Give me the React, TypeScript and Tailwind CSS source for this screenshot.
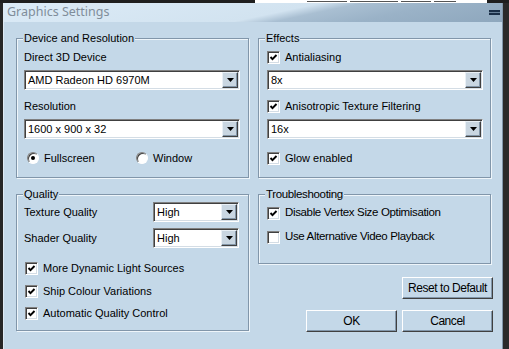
import React from "react";

const BODY = "bg-[#c4d8e8]";
const NARROW = "text-[11.5px] tracking-[-0.35px]";

function Arrow() {
  return (
    <svg width="7" height="4" viewBox="0 0 7 4" className="block">
      <polygon points="0,0 7,0 3.5,4" fill="#000" />
    </svg>
  );
}

function Combo({ value, className = "" }: { value: string; className?: string }) {
  return (
    <div
      className={`flex h-[20px] items-stretch bg-white border border-t-[#808080] border-l-[#808080] border-b-white border-r-white shadow-[inset_1px_1px_0_#404040,inset_-1px_-1px_0_#d4dde5] ${className}`}
    >
      <div className="flex flex-1 items-center pl-[3px] text-[11px] leading-none text-black">{value}</div>
      <div className="my-[1px] mr-[1px] flex w-[16px] items-center justify-center bg-[#c9d6e1] border border-t-[#e9f0f6] border-l-[#e9f0f6] border-b-[#404040] border-r-[#404040] shadow-[inset_-1px_-1px_0_#8396a8]">
        <Arrow />
      </div>
    </div>
  );
}

function Check({ checked }: { checked: boolean }) {
  return (
    <div className="flex h-[13px] w-[13px] shrink-0 items-center justify-center bg-white border border-t-[#808080] border-l-[#808080] border-b-white border-r-white shadow-[inset_1px_1px_0_#404040,inset_-1px_-1px_0_#d4dde5]">
      {checked && (
        <svg width="9" height="9" viewBox="0 0 9 9" className="block">
          <polyline points="1.5,4 3.5,6.2 7.5,2" fill="none" stroke="#000" strokeWidth="1.9" />
        </svg>
      )}
    </div>
  );
}

function Radio({ checked }: { checked: boolean }) {
  return (
    <div className="flex h-[12px] w-[12px] shrink-0 items-center justify-center rounded-full bg-white border border-t-[#808080] border-l-[#808080] border-b-white border-r-white shadow-[inset_1px_1px_0_#404040]">
      {checked && <div className="h-[4px] w-[4px] rounded-full bg-black" />}
    </div>
  );
}

function Group({
  title,
  className = "",
  children,
  narrow = false,
}: {
  title: string;
  className?: string;
  children?: React.ReactNode;
  narrow?: boolean;
}) {
  return (
    <div
      className={`relative border border-[#8196aa] shadow-[inset_1px_1px_0_#eef5fa,1px_1px_0_#eef5fa] ${className}`}
    >
      <span
        className={`absolute -top-[8px] left-[6px] ${BODY} px-[1px] leading-[14px] text-black ${
          narrow ? NARROW : "text-[11px]"
        }`}
      >
        {title}
      </span>
      {children}
    </div>
  );
}

function CheckRow({ label, checked, narrow = false, className = "" }: { label: string; checked: boolean; narrow?: boolean; className?: string }) {
  return (
    <div className={`flex h-[14px] items-center gap-[5px] ${className}`}>
      <Check checked={checked} />
      <span className={`whitespace-nowrap leading-none text-black ${narrow ? NARROW : "text-[11px]"}`}>{label}</span>
    </div>
  );
}

function Button({ label, className = "" }: { label: string; className?: string }) {
  return (
    <div
      className={`flex h-[22px] w-[91px] items-center justify-center ${BODY} border border-t-white border-l-white border-b-[#404040] border-r-[#404040] shadow-[inset_-1px_-1px_0_#8196aa] whitespace-nowrap text-[12px] tracking-[-0.45px] leading-none text-black ${className}`}
    >
      {label}
    </div>
  );
}

export default function App() {
  return (
    <div className="flex h-[349px] w-[509px] flex-col overflow-hidden bg-[#1f1f1f] font-['Liberation_Sans',Arial,sans-serif]">
      {/* background strip above window */}
      <div className="flex h-[3px] shrink-0">
        <div className="w-[255px]" />
        <div className="flex w-[232px] items-start gap-[3px] bg-white pl-[52px] pt-[1px]">
          <div className="h-[1px] w-[40px] bg-[#555]" />
          <div className="h-[1px] w-[48px] bg-[#555]" />
          <div className="h-[1px] w-[30px] bg-[#555]" />
          <div className="h-[1px] w-[22px] bg-[#555]" />
        </div>
      </div>
      <div className="flex flex-1">
        <div className="w-[3px] bg-[#262626]" />
        {/* window */}
        <div className="flex w-[500px] flex-col border-l border-r border-l-[#dfeaf3] border-r-[#7f95a9]">
          <div className="flex h-[19px] shrink-0 items-center justify-between bg-[linear-gradient(168deg,#dcebf7_0%,#d2e3f0_54%,#a9bfd2_61%,#9ab2c7_75%,#8ea7bd_100%)] pl-[3px] pr-[2px]">
            <span className="font-['Noto_Sans',sans-serif] text-[12.5px] leading-none text-[#808d9a]">Graphics Settings</span>
            <div className="flex h-[5px] w-[11px] flex-col">
              <div className="h-[2px] bg-[#1b2f47]" />
              <div className="h-[1px] bg-[#6a829a]" />
              <div className="h-[2px] bg-[#1b2f47]" />
            </div>
          </div>
          <div className={`flex flex-1 flex-col ${BODY} pl-[12px] pt-[16px]`}>
            <div className="flex gap-[9px]">
              <Group title="Device and Resolution" className="h-[140px] w-[233px] pl-[7px] pr-[8px] pt-[11px]">
                <div className="h-[14px] text-[11px] leading-[14px] text-black">Direct 3D Device</div>
                <Combo value="AMD Radeon HD 6970M" className="mt-[6px]" />
                <div className="mt-[9px] h-[14px] text-[11px] leading-[14px] text-black">Resolution</div>
                <Combo value="1600 x 900 x 32" className="mt-[6px]" />
                <div className="mt-[12px] flex h-[14px] items-center text-[11px] leading-none text-black">
                  <div className="flex w-[106px] items-center gap-[5px] pl-[3px]">
                    <Radio checked />
                    <span>Fullscreen</span>
                  </div>
                  <div className="flex items-center gap-[5px] pl-[6px]">
                    <Radio checked={false} />
                    <span>Window</span>
                  </div>
                </div>
              </Group>
              <Group title="Effects" className="h-[140px] w-[233px] pl-[8px] pr-[7px] pt-[11px]">
                <CheckRow label="Antialiasing" checked />
                <Combo value="8x" className="mt-[6px]" />
                <CheckRow label="Anisotropic Texture Filtering" checked className="mt-[9px]" />
                <Combo value="16x" className="mt-[6px]" />
                <CheckRow label="Glow enabled" checked className="mt-[12px]" />
              </Group>
            </div>
            <div className="mt-[16px] flex gap-[9px]">
              <Group title="Quality" className="h-[137px] w-[233px] pl-[7px] pr-[9px] pt-[7px]">
                <div className="flex h-[20px] items-center justify-between">
                  <span className="text-[11px] leading-none text-black">Texture Quality</span>
                  <Combo value="High" className="w-[86px]" />
                </div>
                <div className="mt-[6px] flex h-[20px] items-center justify-between">
                  <span className="text-[11px] leading-none text-black">Shader Quality</span>
                  <Combo value="High" className="w-[86px]" />
                </div>
                <div className="pl-[1px]">
                  <CheckRow label="More Dynamic Light Sources" checked className="mt-[13px]" />
                  <CheckRow label="Ship Colour Variations" checked className="mt-[9px]" />
                  <CheckRow label="Automatic Quality Control" checked className="mt-[8px]" />
                </div>
              </Group>
              <div className="flex w-[233px] flex-col">
                <Group title="Troubleshooting" narrow className="h-[70px] pl-[8px] pt-[11px]">
                  <CheckRow label="Disable Vertex Size Optimisation" checked narrow />
                  <CheckRow label="Use Alternative Video Playback" checked={false} narrow className="mt-[10px]" />
                </Group>
                <div className="-mr-[2px] mt-[13px] flex justify-end">
                  <Button label="Reset to Default" />
                </div>
                <div className="-mr-[2px] mt-[11px] flex justify-end gap-[5px]">
                  <Button label="OK" />
                  <Button label="Cancel" />
                </div>
              </div>
            </div>
          </div>
        </div>
        <div className="flex-1 bg-[#2a2a2a]" />
      </div>
    </div>
  );
}
